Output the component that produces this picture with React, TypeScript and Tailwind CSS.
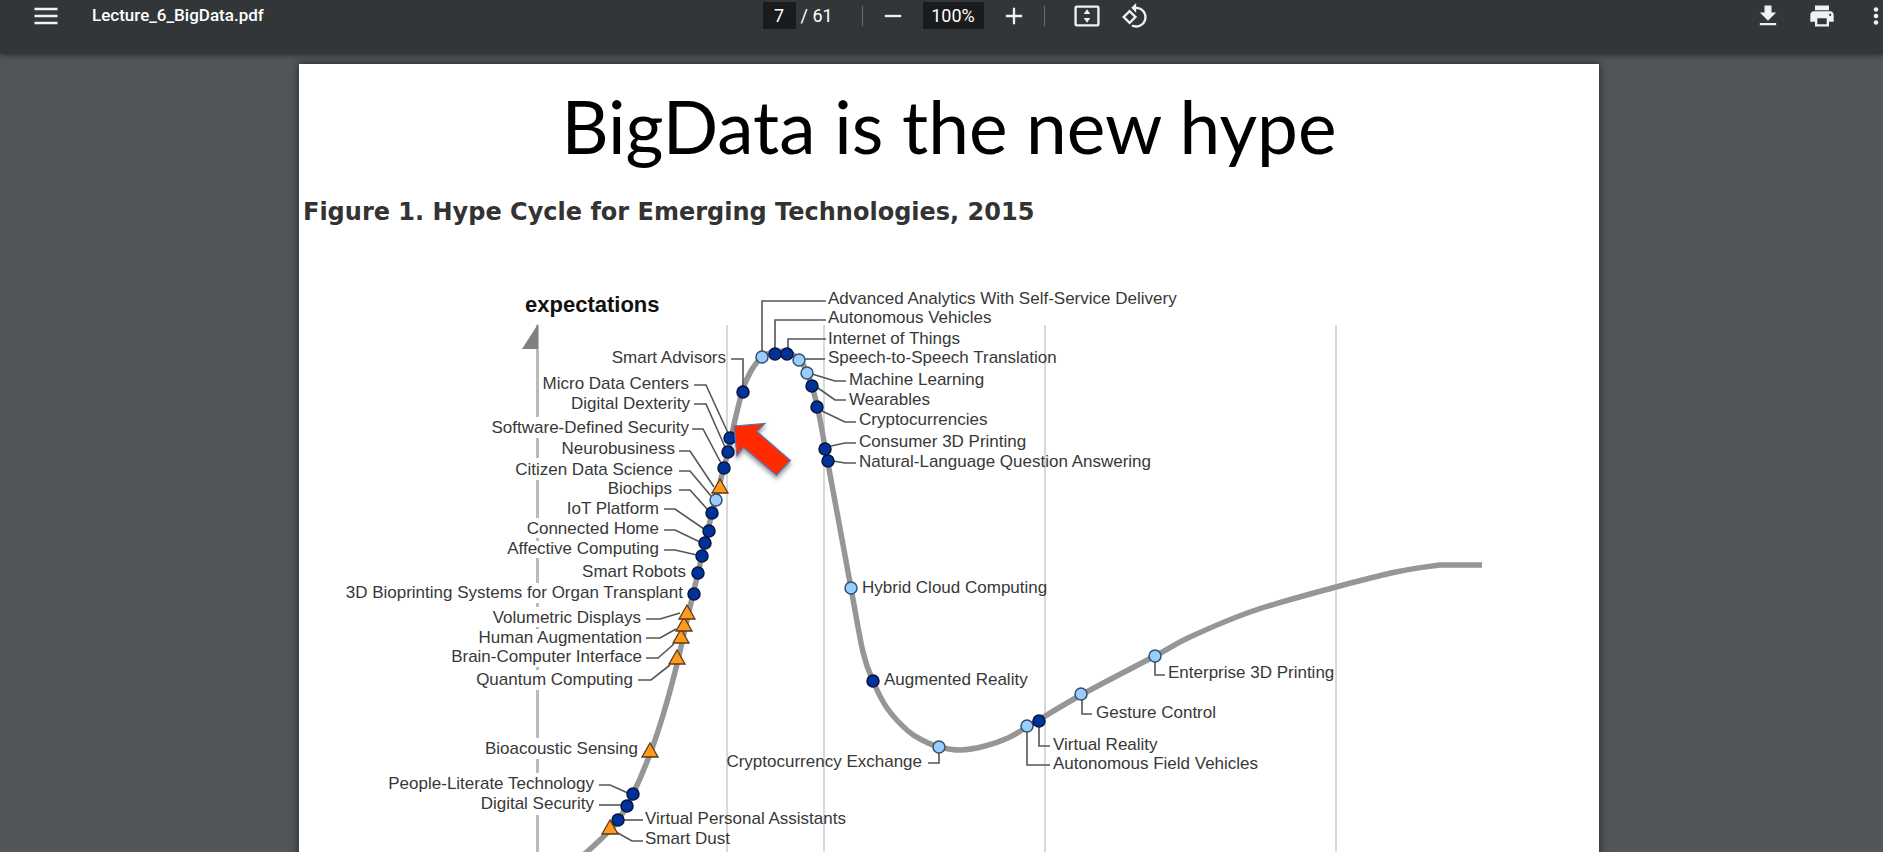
import React from "react";

type Point = [number, number];

const DARK = "#003399";
const LIGHT = "#99ccff";

const curve: Point[] = [
  [578, 859], [588, 851], [601, 839], [611, 829], [619, 819], [633, 794], [650, 754], [664, 712], [677, 664],
  [687, 620], [698, 573], [712, 513], [728, 452], [735, 420], [743, 389], [751, 371],
  [762, 357], [774, 352], [788, 352], [799, 360], [807, 372], [817, 405], [827, 458],
  [839, 523], [851, 588], [863, 652], [873, 681], [887, 708], [908, 731], [924, 741],
  [939, 747], [961, 750], [985, 746], [1008, 738], [1027, 727], [1081, 695],
  [1155, 656], [1190, 637], [1253, 611], [1336, 587], [1396, 572], [1439, 565],
];

function smoothPath(points: Point[]): string {
  let d = `M${points[0][0]} ${points[0][1]}`;
  for (let i = 0; i < points.length - 1; i++) {
    const p0 = points[Math.max(i - 1, 0)];
    const p1 = points[i];
    const p2 = points[i + 1];
    const p3 = points[Math.min(i + 2, points.length - 1)];
    d += `C${p1[0] + (p2[0] - p0[0]) / 6} ${p1[1] + (p2[1] - p0[1]) / 6} ${p2[0] - (p3[0] - p1[0]) / 6} ${p2[1] - (p3[1] - p1[1]) / 6} ${p2[0]} ${p2[1]}`;
  }
  return d;
}

const circles: [number, number, string][] = [
  [743, 392, DARK], [762, 357, LIGHT], [775, 354, DARK], [787, 354, DARK], [799, 360, LIGHT],
  [807, 373, LIGHT], [812, 386, DARK], [817, 407, DARK], [825, 449, DARK], [828, 461, DARK],
  [730, 438, DARK], [728, 452, DARK], [724, 468, DARK], [716, 500, LIGHT], [712, 513, DARK],
  [709, 531, DARK], [705, 543, DARK], [702, 556, DARK], [698, 573, DARK], [694, 594, DARK],
  [633, 794, DARK], [627, 806, DARK], [618, 820, DARK],
  [851, 588, LIGHT], [873, 681, DARK], [939, 747, LIGHT], [1027, 726, LIGHT], [1039, 721, DARK],
  [1081, 694, LIGHT], [1155, 656, LIGHT],
];

// Apex of each triangle marker
const triangles: Point[] = [
  [681, 629], [684, 617], [687, 605], [677, 650], [720, 479], [650, 743], [610, 820],
];

const leaders = [
  "731,359 743,359 743,387", "694,385 706,385 728,433", "694,404 706,404 725,447",
  "692,429 703,429 721,463", "679,451 690,451 714,487", "679,471 690,471 711,496",
  "679,490 690,490 708,510", "664,509 675,509 704,529", "664,530 675,530 700,542",
  "664,550 675,550 697,555", "646,619 660,619 680,613", "646,638 660,638 676,629",
  "646,658 658,658 674,644", "638,680 651,680 670,665", "599,785 610,785 628,793",
  "599,805 622,805", "624,820 643,820", "616,832 632,841 643,841",
  "762,352 762,301 826,301", "775,350 775,320 826,320", "788,350 788,339 826,339",
  "804,359 825,359", "812,374 835,381 846,381", "818,388 835,400 846,400",
  "822,411 845,422 856,422", "831,446 845,443 856,443", "833,461 845,463 856,463",
  "928,763 939,763 939,753", "1027,732 1027,765 1050,765", "1039,727 1039,746 1050,746",
  "1082,700 1082,714 1092,714", "1155,662 1155,675 1165,675",
];

const leftLabels: [string, number, number][] = [
  ["Smart Advisors", 726, 363], ["Micro Data Centers", 689, 389], ["Digital Dexterity", 690, 409],
  ["Software-Defined Security", 689, 433], ["Neurobusiness", 675, 454], ["Citizen Data Science", 673, 475],
  ["Biochips", 672, 494], ["IoT Platform", 659, 514], ["Connected Home", 659, 534],
  ["Affective Computing", 659, 554], ["Smart Robots", 686, 577],
  ["3D Bioprinting Systems for Organ Transplant", 683, 598], ["Volumetric Displays", 641, 623],
  ["Human Augmentation", 642, 643], ["Brain-Computer Interface", 642, 662], ["Quantum Computing", 633, 685],
  ["Bioacoustic Sensing", 638, 754], ["People-Literate Technology", 594, 789], ["Digital Security", 594, 809],
  ["Cryptocurrency Exchange", 922, 767],
];

const rightLabels: [string, number, number][] = [
  ["Advanced Analytics With Self-Service Delivery", 828, 304], ["Autonomous Vehicles", 828, 323],
  ["Internet of Things", 828, 344], ["Speech-to-Speech Translation", 828, 363],
  ["Machine Learning", 849, 385], ["Wearables", 849, 405], ["Cryptocurrencies", 859, 425],
  ["Consumer 3D Printing", 859, 447], ["Natural-Language Question Answering", 859, 467],
  ["Hybrid Cloud Computing", 862, 593], ["Augmented Reality", 884, 685],
  ["Virtual Reality", 1053, 750], ["Autonomous Field Vehicles", 1053, 769],
  ["Gesture Control", 1096, 718], ["Enterprise 3D Printing", 1168, 678],
  ["Virtual Personal Assistants", 645, 824], ["Smart Dust", 645, 844],
];

// The axis line is interrupted where a label crosses it
const axisSegments: Point[] = [
  [325, 417], [438, 458], [480, 518], [538, 541], [558, 583], [603, 607],
  [627, 629], [667, 670], [690, 738], [759, 773], [815, 1039],
];

function HypeChart() {
  return (
    <svg viewBox="299 240 1300 799" className="block w-full" role="img" aria-label="Hype cycle curve">
      <defs>
        <filter id="arrow-shadow" x="-30%" y="-30%" width="160%" height="170%">
          <feDropShadow dx="0" dy="3" stdDeviation="2" floodOpacity="0.4" />
        </filter>
      </defs>
      <g stroke="#d9d9d9" strokeWidth="2">
        {[727, 824, 1045, 1336].map((x) => (
          <line key={x} x1={x} x2={x} y1="325" y2="1039" />
        ))}
      </g>
      <g stroke="#bbb" strokeWidth="3">
        {axisSegments.map(([a, b]) => (
          <line key={a} x1="537.5" x2="537.5" y1={a} y2={b} />
        ))}
      </g>
      <path d="M522 349L538 324V349Z" fill="#808080" />
      <path d={smoothPath(curve) + "H1482"} fill="none" stroke="#969696" strokeWidth="5.5" />
      <g fill="none" stroke="#555" strokeWidth="1.6">
        {leaders.map((p) => (
          <polyline key={p} points={p} />
        ))}
      </g>
      {circles.map(([x, y, fill]) => (
        <circle key={`${x}-${y}`} cx={x} cy={y} r="6" fill={fill} stroke={fill === DARK ? "#06143f" : "#35506b"} strokeWidth="1.5" />
      ))}
      {triangles.map(([x, y]) => (
        <path key={`${x}-${y}`} d={`M${x} ${y}l8 14h-16z`} fill="#ff9922" stroke="#5c3a12" strokeWidth="1.3" />
      ))}
      <g fill="#383838" className="font-['Liberation_Sans',Arial,sans-serif] text-[17px]">
        {leftLabels.map(([t, x, y]) => (
          <text key={t} x={x} y={y} textAnchor="end">{t}</text>
        ))}
        {rightLabels.map(([t, x, y]) => (
          <text key={t} x={x} y={y}>{t}</text>
        ))}
      </g>
      <text x="525" y="312" fill="#111" className="font-['Liberation_Sans',Arial,sans-serif] text-[22px] font-bold">expectations</text>
      <path
        d="M734 426L765 423.500L757 431.500L790.500 460.500L776.500 475.500L743.500 447.500L737 456Z"
        fill="#ff2a00" stroke="#4a7ebb" strokeWidth="1.2" filter="url(#arrow-shadow)"
      />
    </svg>
  );
}

function IconButton({ label, children }: { label: string; children: React.ReactNode }) {
  return (
    <button type="button" aria-label={label} className="flex size-7 shrink-0 items-center justify-center text-[#f1f1f1]">
      <svg viewBox="0 0 24 24" fill="currentColor" className="size-7">{children}</svg>
    </button>
  );
}

export default function App() {
  return (
    <div className="flex h-screen flex-col overflow-hidden bg-[#525659] font-[Roboto,sans-serif]">
      <header className="z-10 h-[54px] shrink-0 bg-[#323639] text-[17px] text-white shadow-[0_1px_6px_rgba(0,0,0,0.5)]">
        <div className="grid h-[31px] grid-cols-[1fr_auto_1fr] items-center">
          <div className="flex items-center gap-8 pl-8">
            <button type="button" aria-label="Menu" className="flex size-7 items-center justify-center text-[#f1f1f1]">
              <svg viewBox="0 0 28 28" fill="currentColor" className="size-7">
                <path d="M2.500 5.700h23v2.600h-23zM2.500 12.700h23v2.600h-23zM2.500 19.700h23v2.600h-23z" />
              </svg>
            </button>
            <span className="font-medium">Lecture_6_BigData.pdf</span>
          </div>
          <div className="flex items-center pl-7 text-lg">
            <input aria-label="Page" defaultValue="7" className="h-[27px] w-[33px] bg-[#191b1c] text-center" />
            <span className="w-[66px] pl-[5px]">/ 61</span>
            <span className="h-5 w-px bg-[#6b6e70]" />
            <div className="flex items-center gap-4 pr-3 pl-4">
              <IconButton label="Zoom out"><path d="M5 11h14v2H5z" /></IconButton>
              <input aria-label="Zoom level" defaultValue="100%" className="h-[27px] w-[61px] bg-[#191b1c] text-center" />
              <IconButton label="Zoom in"><path d="M19 13h-6v6h-2v-6H5v-2h6V5h2v6h6z" /></IconButton>
            </div>
            <span className="mx-1 h-5 w-px bg-[#6b6e70]" />
            <div className="flex items-center gap-5 pl-6">
              <IconButton label="Fit to page">
                <rect x="2.200" y="4" width="19.600" height="16" rx="1" fill="none" stroke="currentColor" strokeWidth="2" />
                <path d="M12 6.300l2.800 4H9.200zM12 17.700l2.800-4H9.200z" />
              </IconButton>
              <IconButton label="Rotate counterclockwise">
                <path d="M7.34 6.41L.86 12.9l6.49 6.48 6.49-6.48-6.5-6.49zM3.69 12.9l3.66-3.66L11 12.9l-3.66 3.66-3.65-3.66zm15.67-6.26C17.61 4.88 15.3 4 13 4V.76L8.76 5 13 9.24V6c1.79 0 3.58.68 4.95 2.05 2.73 2.73 2.73 7.17 0 9.9C16.58 19.32 14.79 20 13 20c-.97 0-1.94-.21-2.84-.61l-1.49 1.49C10.02 21.62 11.51 22 13 22c2.3 0 4.61-.88 6.36-2.64 3.52-3.51 3.52-9.21 0-12.72z" />
              </IconButton>
            </div>
          </div>
          <div className="flex items-center justify-end gap-[26px]">
            <IconButton label="Download"><path d="M19 9h-4V3H9v6H5l7 7 7-7zM5 18v2h14v-2H5z" /></IconButton>
            <IconButton label="Print">
              <path d="M19 8H5c-1.66 0-3 1.34-3 3v6h4v4h12v-4h4v-6c0-1.66-1.34-3-3-3zm-3 11H8v-5h8v5zm3-7c-.55 0-1-.45-1-1s.45-1 1-1 1 .45 1 1-.45 1-1 1zm-1-9H6v4h12V3z" />
            </IconButton>
            <button type="button" aria-label="More actions" className="flex h-7 w-[21px] items-center justify-start pl-[4px] text-[#f1f1f1]">
              <svg viewBox="0 0 20 28" fill="currentColor" className="h-7 w-5 shrink-0">
                <circle cx="10" cy="7.500" r="2.300" />
                <circle cx="10" cy="14" r="2.300" />
                <circle cx="10" cy="20.500" r="2.300" />
              </svg>
            </button>
          </div>
        </div>
      </header>
      <main className="flex flex-1 justify-center overflow-hidden pt-[10px] pl-[15px]">
        <article className="flex h-max w-full max-w-[1300px] flex-col bg-white shadow-[0_0_8px_rgba(0,0,0,0.6)]">
          <h1 className="pt-4 pb-1 text-center font-[Lato,'Gill_Sans',sans-serif] text-[73px] leading-[92px] text-black">
            BigData is the new hype
          </h1>
          <h2 className="h-16 pt-5 pl-1 font-['DejaVu_Sans',Verdana,sans-serif] text-2xl font-bold text-[#333]">
            Figure 1. Hype Cycle for Emerging Technologies, 2015
          </h2>
          <HypeChart />
        </article>
      </main>
    </div>
  );
}
